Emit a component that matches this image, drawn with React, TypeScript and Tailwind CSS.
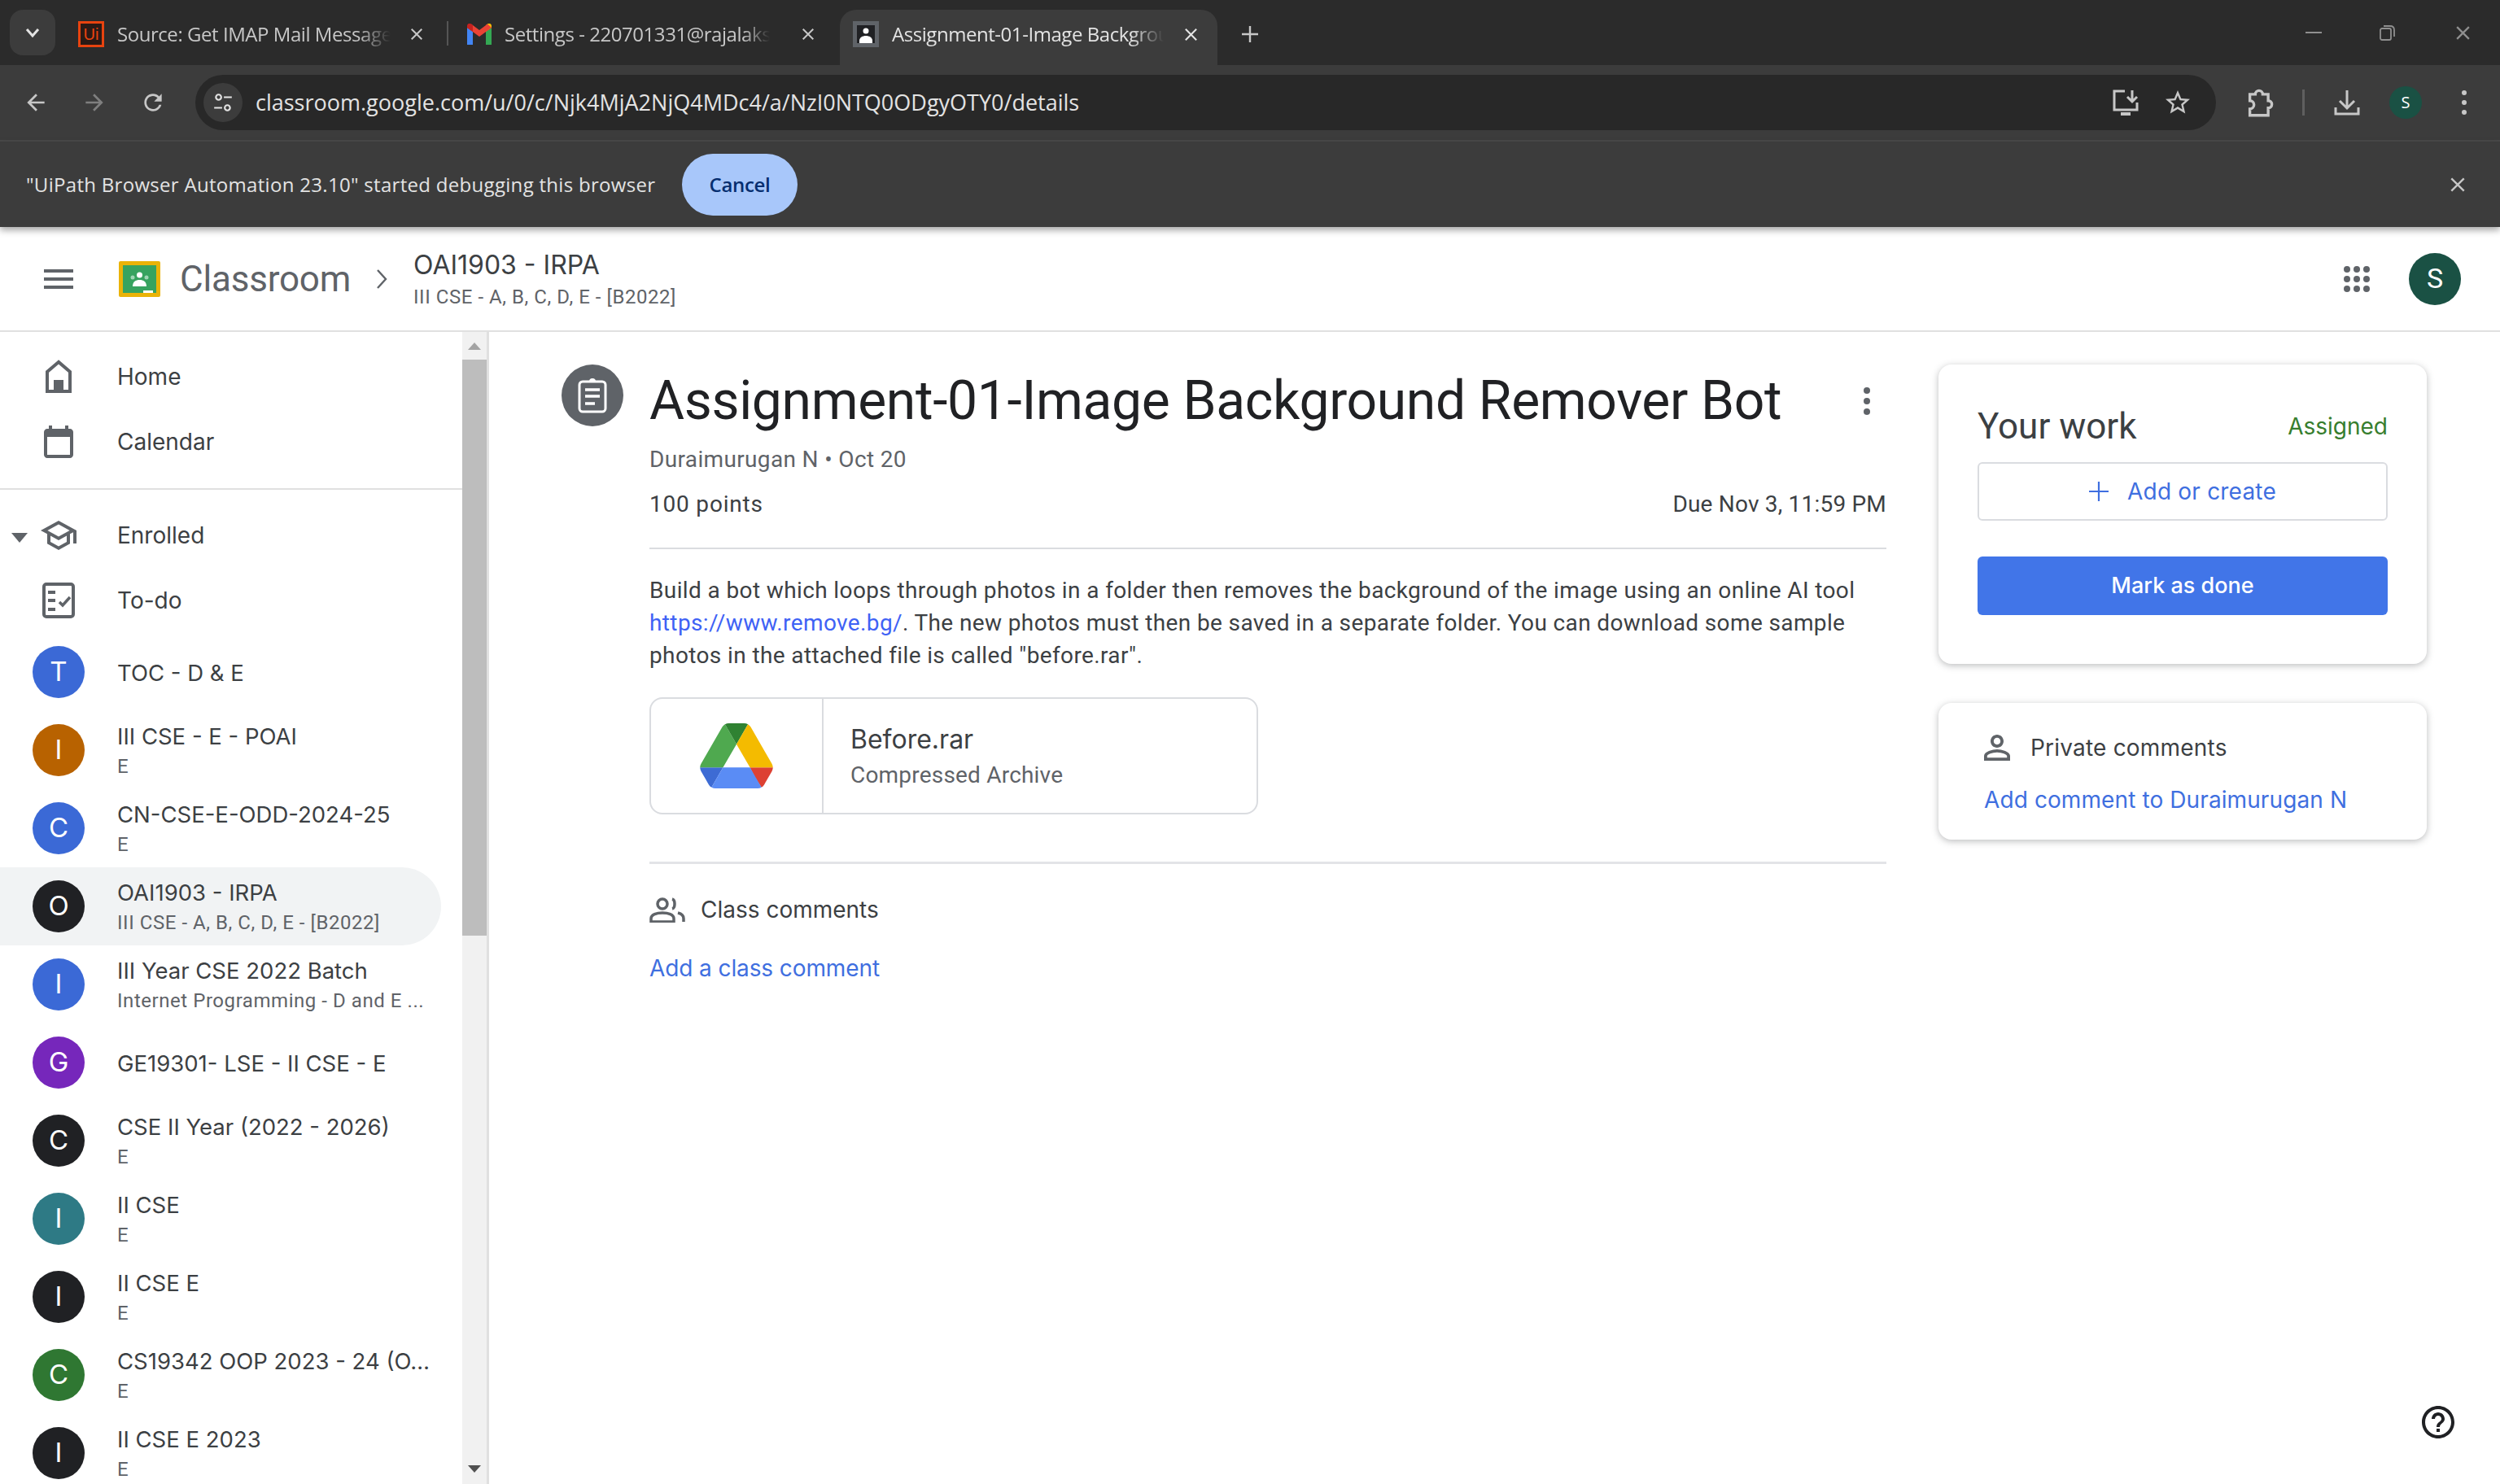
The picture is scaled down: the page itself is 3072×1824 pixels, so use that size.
// Classroom assignment page inside a dark Chrome window, drawn at 2x sizes.
import type { ReactNode } from "react";

const CHROME = "font-['Open_Sans',sans-serif]";
const BODY = "font-['Roboto',sans-serif]";
const GSANS = "font-['Inter',sans-serif]";

const COURSES = [
  { l: "T", c: "bg-[#3b69d6]", t: "TOC - D & E", s: "" },
  { l: "I", c: "bg-[#b86200]", t: "III CSE - E - POAI", s: "E" },
  { l: "C", c: "bg-[#3b69d6]", t: "CN-CSE-E-ODD-2024-25", s: "E" },
  { l: "O", c: "bg-[#202124]", t: "OAI1903 - IRPA", s: "III CSE - A, B, C, D, E - [B2022]", on: true },
  { l: "I", c: "bg-[#3b69d6]", t: "III Year CSE 2022 Batch", s: "Internet Programming - D and E ..." },
  { l: "G", c: "bg-[#7627bb]", t: "GE19301- LSE - II CSE - E", s: "" },
  { l: "C", c: "bg-[#202124]", t: "CSE II Year (2022 - 2026)", s: "E" },
  { l: "I", c: "bg-[#2e7a85]", t: "II CSE", s: "E" },
  { l: "I", c: "bg-[#202124]", t: "II CSE E", s: "E" },
  { l: "C", c: "bg-[#2f7732]", t: "CS19342 OOP 2023 - 24 (O…", s: "E" },
  { l: "I", c: "bg-[#202124]", t: "II CSE E 2023", s: "E" },
];

function Mi({ d, className }: { d: string; className: string }) {
  return (
    <svg viewBox="0 0 24 24" fill="currentColor" className={className}>
      <path d={d} />
    </svg>
  );
}

function XIcon({ className }: { className: string }) {
  return (
    <svg viewBox="0 0 20 20" fill="none" stroke="currentColor" strokeWidth="2.2" className={className}>
      <path d="M3 3l14 14M17 3L3 17" />
    </svg>
  );
}

function UiPathIcon() {
  return (
    <div className="w-[32px] h-[32px] shrink-0 border-[3px] border-[#e8430f] bg-[#2a1a16] flex items-center justify-center text-[#e8430f] text-[20px] leading-none font-['Liberation_Sans',sans-serif]">
      Ui
    </div>
  );
}

function GmailIcon() {
  return (
    <svg viewBox="0 0 30 26" className="w-[30px] h-[26px] shrink-0">
      <path d="M0 5v21h7V10z" fill="#4285f4" />
      <path d="M30 5v21h-7V10z" fill="#34a853" />
      <path d="M23 10l7-5V3c0-3-3-4-5-2.500L23 2z" fill="#fbbc04" />
      <path d="M0 5l15 11L30 5 25 .5 15 8 5 .5z" fill="#ea4335" />
      <path d="M0 3v2l7 5V2L5 .5C3-1 0 0 0 3z" fill="#c5221f" />
    </svg>
  );
}

function ClassFavicon() {
  return (
    <div className="w-[32px] h-[32px] shrink-0 bg-[#5f6368] p-[5px]">
      <div className="w-full h-full bg-[#202124] flex items-end justify-center">
        <svg viewBox="0 0 22 22" className="w-[22px] h-[22px]" fill="#fff">
          <circle cx="11" cy="7" r="3.500" />
          <path d="M3 22v-3c0-4 4-6 8-6s8 2 8 6v3z" />
        </svg>
      </div>
    </div>
  );
}

function TabStrip() {
  return (
    <div className={`h-[80px] bg-[#2b2b2b] flex items-end shrink-0 ${CHROME}`}>
      <div className="ml-[12px] mb-[12px] w-[56px] h-[56px] rounded-[16px] bg-[#3c3c3c] flex items-center justify-center shrink-0">
        <svg viewBox="0 0 20 20" fill="none" stroke="#e3e3e3" strokeWidth="3" className="w-[20px] h-[20px]">
          <path d="M3 6l7 8 7-8" />
        </svg>
      </div>
      <div className="ml-[12px] w-[472px] h-[68px] shrink-0 flex items-center pb-[8px] pl-[16px] relative">
        <UiPathIcon />
        <div className="ml-[16px] w-[336px] overflow-hidden whitespace-nowrap text-[24px] text-[#c7c7c7] tracking-[-0.45px] [mask-image:linear-gradient(to_right,black_88%,transparent)]">
          Source: Get IMAP Mail Message
        </div>
        <XIcon className="w-[18px] h-[18px] ml-[23px] text-[#c7c7c7]" />
        <div className="absolute left-[469px] top-[14px] w-[2px] h-[30px] bg-[#555]" />
      </div>
      <div className="w-[480px] h-[68px] shrink-0 flex items-center pb-[8px] pl-[22px]">
        <GmailIcon />
        <div className="ml-[16px] w-[326px] overflow-hidden whitespace-nowrap text-[24px] text-[#c7c7c7] tracking-[-0.45px] [mask-image:linear-gradient(to_right,black_90%,transparent)]">
          Settings - 220701331@rajalakshmi.edu.in
        </div>
        <XIcon className="w-[18px] h-[18px] ml-[38px] text-[#c7c7c7]" />
      </div>
      <div className="bg-[#3c3c3c] rounded-t-[20px] shrink-0 w-[464px] h-[68px] flex items-center pl-[16px] pb-[8px]">
        <ClassFavicon />
        <div className="ml-[16px] w-[334px] overflow-hidden whitespace-nowrap text-[24px] text-[#e3e3e3] tracking-[-0.45px] [mask-image:linear-gradient(to_right,black_88%,transparent)]">
          Assignment-01-Image Background Remover Bot
        </div>
        <XIcon className="w-[19px] h-[19px] ml-[24px] text-[#e3e3e3]" />
      </div>
      <div className="ml-[30px] mb-[28px] w-[20px] h-[20px] shrink-0 text-[#c7c7c7]">
        <svg viewBox="0 0 20 20" fill="none" stroke="currentColor" strokeWidth="2.400" className="w-[20px] h-[20px]">
          <path d="M10 0v20M0 10h20" />
        </svg>
      </div>
      <div className="flex-1" />
      <div className="flex items-center h-[80px] text-[#8f8f8f]">
        <div className="w-[20px] h-[2px] bg-current" />
        <svg viewBox="0 0 20 20" fill="none" stroke="currentColor" strokeWidth="1.800" className="w-[20px] h-[20px] ml-[71px]">
          <rect x="1" y="5" width="13" height="14" rx="2" />
          <path d="M5 2h8c3 0 5 2 5 5v8" />
        </svg>
        <XIcon className="w-[21px] h-[21px] ml-[72px] mr-[35px]" />
      </div>
    </div>
  );
}

function Toolbar() {
  return (
    <div className={`h-[94px] bg-[#3c3c3c] border-b-[2px] border-[#4a4a4a] flex items-center shrink-0 ${CHROME}`}>
      <Mi d="M20 11H7.830l5.590-5.590L12 4l-8 8 8 8 1.410-1.410L7.830 13H20v-2z" className="w-[32px] h-[32px] ml-[28px] text-[#c7c7c7]" />
      <Mi d="M12 4l-1.410 1.410L16.170 11H4v2h12.170l-5.580 5.590L12 20l8-8z" className="w-[32px] h-[32px] ml-[40px] text-[#7f7f7f]" />
      <Mi d="M17.650 6.350C16.200 4.900 14.210 4 12 4c-4.420 0-7.990 3.580-7.990 8s3.570 8 7.990 8c3.730 0 6.840-2.550 7.730-6h-2.080c-.82 2.330-3.040 4-5.650 4-3.310 0-6-2.690-6-6s2.690-6 6-6c1.660 0 3.140.69 4.220 1.780L13 11h7V4l-2.350 2.350z" className="w-[32px] h-[32px] ml-[40px] text-[#c7c7c7]" />
      <div className="ml-[36px] w-[2483px] h-[68px] rounded-full bg-[#282828] flex items-center pl-[10px] pr-[29px]">
        <div className="w-[48px] h-[48px] rounded-full bg-[#3c3c3c] flex items-center justify-center shrink-0">
          <svg viewBox="0 0 24 24" fill="none" stroke="#e3e3e3" strokeWidth="2" className="w-[26px] h-[26px]">
            <circle cx="7" cy="6" r="3" />
            <path d="M13 6h9M2 18h9" />
            <circle cx="17" cy="18" r="3" />
          </svg>
        </div>
        <div className="ml-[16px] text-[27px] text-[#e3e3e3] whitespace-nowrap">
          classroom.google.com/u/0/c/Njk4MjA2NjQ4MDc4/a/NzI0NTQ0ODgyOTY0/details
        </div>
        <div className="flex-1" />
        <svg viewBox="0 0 32 32" fill="none" stroke="#c7c7c7" strokeWidth="3" className="w-[32px] h-[32px]">
          <path d="M15 2H2v23h28v-9" />
          <path d="M10 30h12" strokeWidth="4" />
          <path d="M24 1v13M18 9l6 6 6-6" />
        </svg>
        <Mi d="M22 9.240l-7.190-.62L12 2 9.190 8.630 2 9.240l5.460 4.730L5.820 21 12 17.270 18.180 21l-1.630-7.030L22 9.240zM12 15.400l-3.760 2.270 1-4.280-3.320-2.880 4.380-.38L12 6.100l1.710 4.040 4.380.38-3.320 2.880 1 4.280L12 15.400z" className="w-[36px] h-[36px] ml-[30px] text-[#c7c7c7]" />
      </div>
      <svg viewBox="0 0 32 32" fill="none" stroke="#c7c7c7" strokeWidth="3" className="w-[36px] h-[36px] ml-[36px]">
        <path d="M5 7h6a4 4 0 0 1 8 0h6v7a4 4 0 0 1 0 8v8H5v-7a4.500 4.500 0 0 0 0-9z" />
      </svg>
      <div className="ml-[34px] w-[3px] h-[32px] bg-[#5f5f5f]" />
      <svg viewBox="0 0 32 32" fill="none" stroke="#c7c7c7" strokeWidth="3" className="w-[32px] h-[32px] ml-[36px]">
        <path d="M16 1v22M7 14l9 9 9-9M2 22v8h28v-8" />
      </svg>
      <div className="ml-[36px] w-[40px] h-[40px] rounded-full bg-[#1a5144] flex items-center justify-center text-[20px] text-white">S</div>
      <div className="ml-[49px] flex flex-col gap-[6px]">
        <div className="w-[6px] h-[6px] rounded-full bg-[#c7c7c7]" />
        <div className="w-[6px] h-[6px] rounded-full bg-[#c7c7c7]" />
        <div className="w-[6px] h-[6px] rounded-full bg-[#c7c7c7]" />
      </div>
    </div>
  );
}

function InfoBar() {
  return (
    <div className={`h-[105px] bg-[#3c3c3c] flex items-center shrink-0 pl-[32px] pr-[41px] relative z-10 shadow-[0_4px_8px_rgba(0,0,0,0.35)] ${CHROME}`}>
      <span className="text-[24px] text-[#e3e3e3] tracking-[0.3px] whitespace-nowrap w-[806px]">
        "UiPath Browser Automation 23.10" started debugging this browser
      </span>
      <div className="w-[142px] h-[76px] rounded-full bg-[#a8c7fa] flex items-center justify-center text-[24px] font-semibold text-[#062e6f] tracking-[-0.3px]">
        Cancel
      </div>
      <div className="flex-1" />
      <XIcon className="w-[22px] h-[22px] text-[#c7c7c7]" />
    </div>
  );
}

function ClassroomLogo() {
  return (
    <svg viewBox="0 0 51 44" className="w-[51px] h-[44px] shrink-0">
      <rect width="51" height="44" rx="2" fill="#eab308" />
      <rect x="5" y="5" width="41" height="34" fill="#37a35f" />
      <circle cx="25.500" cy="17" r="3.500" fill="#fff" />
      <circle cx="17" cy="20" r="2.500" fill="#9fd6b4" />
      <circle cx="34" cy="20" r="2.500" fill="#9fd6b4" />
      <path d="M17 31c0-6 4-8 8.500-8S34 25 34 31z" fill="#fff" />
      <rect x="30" y="36" width="12" height="3" fill="#fff" />
    </svg>
  );
}

function AppHeader() {
  return (
    <div className={`h-[129px] bg-white border-b-[2px] border-[#e0e0e0] flex items-center shrink-0 ${BODY}`}>
      <Mi d="M3 18h18v-2H3v2zm0-5h18v-2H3v2zm0-7v2h18V6H3z" className="w-[48px] h-[48px] ml-[48px] text-[#5f6368]" />
      <div className="ml-[50px]">
        <ClassroomLogo />
      </div>
      <span className="ml-[24px] w-[209px] text-[44px] text-[#5f6368] tracking-[-0.2px] leading-none whitespace-nowrap">Classroom</span>
      <svg viewBox="0 0 14 24" fill="none" stroke="#5f6368" strokeWidth="2.400" className="w-[14px] h-[24px] ml-[32px]">
        <path d="M2 1l10 11L2 23" />
      </svg>
      <div className="ml-[32px] flex flex-col gap-[3px] pt-[1px]">
        <span className={`text-[32px] leading-[40px] text-[#3c4043] ${GSANS}`}>OAI1903 - IRPA</span>
        <span className="text-[24px] leading-[32px] text-[#5f6368] tracking-[0.55px]">III CSE - A, B, C, D, E - [B2022]</span>
      </div>
      <div className="flex-1" />
      <div className="grid grid-cols-3 gap-[4px] mr-[48px]">
        {Array.from({ length: 9 }).map((_, i) => (
          <div key={i} className="w-[8px] h-[8px] rounded-full bg-[#5f6368]" />
        ))}
      </div>
      <div className="mr-[48px] w-[64px] h-[64px] rounded-full bg-[#1a5144] flex items-center justify-center text-[34px] text-white">S</div>
    </div>
  );
}

function NavRow({ icon, label, caret }: { icon: ReactNode; label: string; caret?: boolean }) {
  return (
    <div className="h-[80px] shrink-0 flex items-center relative">
      {caret && <div className="absolute left-[14px] top-[37px] border-x-[10px] border-x-transparent border-t-[12px] border-t-[#5f6368]" />}
      <div className="w-[144px] pl-[40px] shrink-0">
        <div className="w-[64px] flex justify-center text-[#5f6368]">{icon}</div>
      </div>
      <span className={`text-[28px] text-[#3c4043] ${GSANS}`}>{label}</span>
    </div>
  );
}

function CourseRow({ l, c, t, s, on }: { l: string; c: string; t: string; s: string; on?: boolean }) {
  return (
    <div className={`h-[96px] flex items-center rounded-r-full w-[542px] shrink-0 ${on ? "bg-[#f1f3f4]" : ""}`}>
      <div className={`ml-[40px] w-[64px] h-[64px] shrink-0 rounded-full flex items-center justify-center text-white text-[33px] ${GSANS} ${c}`}>{l}</div>
      <div className="ml-[40px] pt-[2px] flex flex-col whitespace-nowrap">
        <span className={`text-[27.5px] leading-[38px] text-[#3c4043] ${GSANS}`}>{t}</span>
        {s && <span className="text-[24px] leading-[36px] text-[#5f6368] tracking-[0.55px]">{s}</span>}
      </div>
    </div>
  );
}

function Sidebar() {
  return (
    <div className={`w-[601px] shrink-0 flex border-r-[3px] border-[#e0e0e0] overflow-hidden ${BODY}`}>
      <div className="w-[568px] shrink-0 flex flex-col pt-[15px]">
        <NavRow label="Home" icon={
          <svg viewBox="0 0 32 44" fill="none" className="w-[32px] h-[44px]">
            <path d="M16 4 2 16v24h28V16z" stroke="currentColor" strokeWidth="4" />
            <rect x="10" y="26" width="12" height="14" fill="currentColor" />
          </svg>
        } />
        <NavRow label="Calendar" icon={
          <svg viewBox="0 0 36 40" fill="currentColor" className="w-[36px] h-[40px]">
            <path d="M6 0h4v4h16V0h4v4h2c2 0 4 2 4 4v28c0 2-2 4-4 4H4c-2 0-4-2-4-4V8c0-2 2-4 4-4h2zM4 14v22h28V14z" />
          </svg>
        } />
        <div className="h-[2px] bg-[#e0e0e0] mt-[17px] mb-[16px] shrink-0" />
        <NavRow caret label="Enrolled" icon={<Mi d="M12 3L1 9l4 2.180v6L12 21l7-3.820v-6l2-1.090V17h2V9L12 3zm6.820 6L12 12.720 5.180 9 12 5.280 18.820 9zM17 15.990l-5 2.730-5-2.730v-3.720L12 15l5-2.730v3.720z" className="w-[48px] h-[48px]" />} />
        <NavRow label="To-do" icon={
          <svg viewBox="0 0 40 44" fill="none" stroke="currentColor" strokeWidth="4" className="w-[40px] h-[44px]">
            <rect x="2" y="2" width="36" height="40" rx="3" />
            <path d="M7 12h9M7 22h9M7 33h9" />
            <path d="M21 24l4 4 9-10" strokeWidth="3.500" />
          </svg>
        } />
        {COURSES.map((k, i) => <CourseRow key={i} {...k} />)}
      </div>
      <div className="w-[30px] shrink-0 bg-[#f1f1f1] flex flex-col items-center">
        <div className="h-[34px] flex items-center justify-center shrink-0">
          <div className="border-x-[8px] border-x-transparent border-b-[9px] border-b-[#a3a3a3]" />
        </div>
        <div className="w-full h-[708px] bg-[#bdbdbd] shrink-0" />
        <div className="flex-1" />
        <div className="pb-[14px] shrink-0">
          <div className="border-x-[8px] border-x-transparent border-t-[9px] border-t-[#505050]" />
        </div>
      </div>
    </div>
  );
}

function DriveLogo() {
  return (
    <svg viewBox="0 0 87.300 78" className="w-[90px] h-[80px]">
      <path d="m6.600 66.850 3.850 6.650c.8 1.400 1.950 2.500 3.300 3.300l13.750-23.800h-27.500c0 1.550.4 3.100 1.200 4.500z" fill="#3d6bd4" />
      <path d="m43.650 25-13.750-23.800c-1.350.8-2.500 1.900-3.300 3.300l-25.400 44a9.060 9.060 0 0 0 -1.200 4.500h27.500z" fill="#4fa94f" />
      <path d="m73.550 76.800c1.350-.8 2.500-1.900 3.300-3.300l1.600-2.750 7.650-13.250c.8-1.400 1.200-2.950 1.200-4.500h-27.502l5.852 11.500z" fill="#dd4133" />
      <path d="m43.650 25 13.750-23.800c-1.350-.8-2.900-1.200-4.500-1.200h-18.500c-1.600 0-3.150.45-4.500 1.200z" fill="#2f8232" />
      <path d="m59.800 53h-32.300l-13.750 23.800c1.350.8 2.900 1.200 4.500 1.200h50.800c1.600 0 3.150-.45 4.500-1.200z" fill="#5a8cf5" />
      <path d="m73.400 26.500-12.700-22c-.8-1.400-1.950-2.500-3.300-3.300l-13.750 23.800 16.150 28h27.450c0-1.550-.4-3.100-1.200-4.500z" fill="#f4bb00" />
    </svg>
  );
}

function Details() {
  return (
    <div className="w-[1781px] shrink-0 flex pl-[89px] pt-[40px]">
      <div className="w-[76px] h-[76px] rounded-full bg-[#5f6368] flex items-center justify-center shrink-0">
        <svg viewBox="0 0 36 44" className="w-[36px] h-[44px]" fill="none">
          <rect x="2" y="5" width="32" height="37" rx="4" stroke="#fff" strokeWidth="3" />
          <path d="M14 5a4 4 0 0 1 8 0z" fill="#fff" />
          <path d="M9 15h18M9 23h18M9 32h12" stroke="#fff" strokeWidth="3.500" />
        </svg>
      </div>
      <div className="ml-[32px] w-[1520px] flex flex-col shrink-0">
        <div className="flex items-center h-[90px]">
          <span className="text-[66px] leading-[90px] text-[#202124] tracking-[-0.35px] whitespace-nowrap">Assignment-01-Image Background Remover Bot</span>
          <div className="flex-1" />
          <div className="flex flex-col gap-[5px] mr-[20px]">
            <div className="w-[8px] h-[8px] rounded-full bg-[#5f6368]" />
            <div className="w-[8px] h-[8px] rounded-full bg-[#5f6368]" />
            <div className="w-[8px] h-[8px] rounded-full bg-[#5f6368]" />
          </div>
        </div>
        <div className="mt-[7px] text-[28px] leading-[40px] text-[#5f6368] tracking-[0.35px]">Duraimurugan N • Oct 20</div>
        <div className="mt-[15px] flex justify-between text-[28px] leading-[40px] text-[#3c4043] tracking-[0.2px]">
          <span className="tracking-[0.8px]">100 points</span>
          <span>Due Nov 3, 11:59 PM</span>
        </div>
        <div className="mt-[33px] h-[2px] bg-[#dadce0]" />
        <div className="mt-[31px] text-[28px] leading-[40px] text-[#3c4043] tracking-[0.38px] whitespace-nowrap">
          <div>Build a bot which loops through photos in a folder then removes the background of the image using an online AI tool</div>
          <div>
            <span className="text-[#3f62f5]">https://www.remove.bg/</span>. The new photos must then be saved in a separate folder. You can download some sample
          </div>
          <div>photos in the attached file is called "before.rar".</div>
        </div>
        <div className="mt-[31px] w-[748px] h-[144px] rounded-[16px] border-[2px] border-[#dadce0] flex">
          <div className="w-[212px] shrink-0 border-r-[2px] border-[#dadce0] flex items-center justify-center">
            <DriveLogo />
          </div>
          <div className="pl-[33px] pt-[4px] flex flex-col justify-center">
            <span className={`text-[32px] leading-[44px] text-[#3c4043] ${GSANS}`}>Before.rar</span>
            <span className="text-[28px] leading-[44px] text-[#5f6368] tracking-[0.2px]">Compressed Archive</span>
          </div>
        </div>
        <div className="mt-[58px] h-[3px] bg-[#e3e4e7]" />
        <div className="mt-[36px] flex items-center h-[40px]">
          <svg viewBox="0 0 44 32" fill="none" stroke="#5f6368" strokeWidth="3.500" className="w-[44px] h-[32px] shrink-0">
            <circle cx="16" cy="9" r="6" />
            <path d="M2 31v-4c0-5 7-7 14-7s14 2 14 7v4z" />
            <path d="M28 3c4 1 4 11 0 12" />
            <path d="M35 20c4 1 7 3 7 7v4" />
          </svg>
          <span className={`ml-[19px] text-[28px] text-[#3c4043] ${GSANS}`}>Class comments</span>
        </div>
        <div className={`mt-[32px] text-[28px] leading-[40px] text-[#3f6fe0] tracking-[-0.1px] ${GSANS}`}>Add a class comment</div>
      </div>
    </div>
  );
}

function SideCards() {
  return (
    <div className="w-[600px] shrink-0 pt-[40px] flex flex-col gap-[48px]">
      <div className="h-[368px] rounded-[16px] bg-white shadow-[0_2px_8px_rgba(60,64,67,0.35)] px-[48px] pt-[48px] flex flex-col">
        <div className="flex items-center justify-between h-[56px]">
          <span className="text-[44px] leading-none text-[#3c4043]">Your work</span>
          <span className={`text-[28px] text-[#377e2e] ${GSANS}`}>Assigned</span>
        </div>
        <div className="mt-[16px] h-[72px] rounded-[6px] border-[2px] border-[#dadce0] flex items-center justify-center text-[#3f6fe0]">
          <svg viewBox="0 0 24 24" fill="none" stroke="currentColor" strokeWidth="2.200" className="w-[24px] h-[24px]">
            <path d="M12 0v24M0 12h24" />
          </svg>
          <span className={`ml-[23px] text-[28px] tracking-[0.2px] ${GSANS}`}>Add or create</span>
        </div>
        <div className={`mt-[44px] h-[72px] rounded-[6px] bg-[#4175e8] flex items-center justify-center text-[27px] font-medium text-white ${GSANS}`}>
          Mark as done
        </div>
      </div>
      <div className="h-[168px] rounded-[16px] bg-white shadow-[0_2px_8px_rgba(60,64,67,0.35)] flex flex-col px-[56px] pt-[35px]">
        <div className="flex items-center h-[40px]">
          <Mi d="M12 5.900c1.160 0 2.100.94 2.100 2.100s-.94 2.100-2.100 2.100S9.900 9.160 9.900 8s.94-2.100 2.100-2.100m0 9c2.970 0 6.100 1.460 6.100 2.100v1.100H5.900V17c0-.64 3.130-2.100 6.100-2.100M12 4C9.790 4 8 5.790 8 8s1.790 4 4 4 4-1.790 4-4-1.790-4-4-4zm0 9c-2.670 0-8 1.340-8 4v3h16v-3c0-2.660-5.330-4-8-4z" className="w-[48px] h-[48px] -ml-[8px] text-[#5f6368] shrink-0" />
          <span className={`ml-[17px] text-[28px] tracking-[0.2px] text-[#3c4043] ${GSANS}`}>Private comments</span>
        </div>
        <div className={`mt-[24px] text-[28px] leading-[40px] text-[#3f6fe0] tracking-[0.1px] whitespace-nowrap ${GSANS}`}>Add comment to Duraimurugan N</div>
      </div>
    </div>
  );
}

export default function App() {
  return (
    <div className="w-[3072px] h-[1824px] overflow-hidden flex flex-col bg-white">
      <TabStrip />
      <Toolbar />
      <InfoBar />
      <AppHeader />
      <div className="flex-1 flex min-h-0 relative">
        <Sidebar />
        <div className={`flex flex-1 ${BODY}`}>
          <Details />
          <SideCards />
        </div>
        <Mi d="M11 18h2v-2h-2v2zm1-16C6.480 2 2 6.480 2 12s4.480 10 10 10 10-4.480 10-10S17.520 2 12 2zm0 18c-4.410 0-8-3.590-8-8s3.590-8 8-8 8 3.590 8 8-3.590 8-8 8zm0-14c-2.210 0-4 1.790-4 4h2c0-1.100.9-2 2-2s2 .9 2 2c0 2-3 1.750-3 5h2c0-2.250 3-2.500 3-5 0-2.210-1.790-4-4-4z" className="absolute left-[2972px] top-[1316px] w-[48px] h-[48px] text-[#202124]" />
      </div>
    </div>
  );
}
